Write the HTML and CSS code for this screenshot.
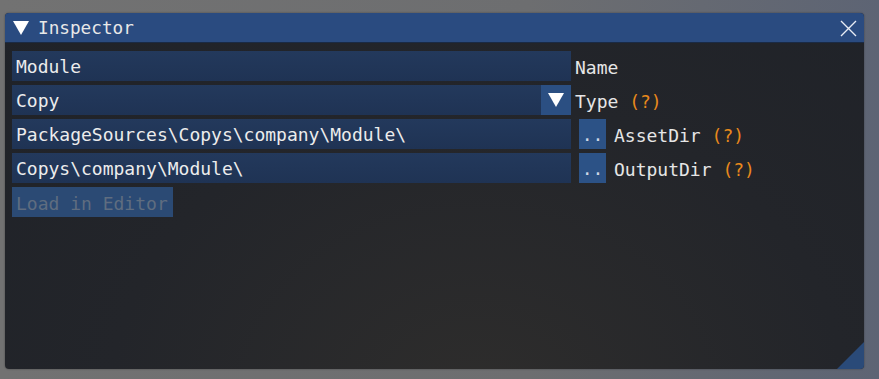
FILE: index.html
```html
<!DOCTYPE html>
<html lang="en">

<head>
    <meta charset="UTF-8">
    <title>Inspector</title>
    <link rel="stylesheet" href="styles.css">
</head>

<body>
    <div class="vindu">
        <div class="tittel">
            <svg class="pil" width="16" height="14" viewBox="0 0 16 14"><polygon points="0,0 16,0 8,14" fill="#ffffff"/></svg>
            <span class="tittelTekst">Inspector</span>
            <svg class="lukk" width="17" height="17" viewBox="0 0 17 17"><path d="M1 1 L16 16 M16 1 L1 16" stroke="#e8ecf4" stroke-width="1.4"/></svg>
        </div>
        <div class="innhold">
            <div class="rad">
                <div class="felt">Module</div>
                <span class="etikett">Name</span>
            </div>
            <div class="rad">
                <div class="felt nedtrekk">
                    <span class="feltTekst">Copy</span>
                    <span class="pilKnapp"><svg width="16" height="14" viewBox="0 0 16 14"><polygon points="0,0 16,0 8,14" fill="#ffffff"/></svg></span>
                </div>
                <span class="etikett">Type <span class="hjelp">(?)</span></span>
            </div>
            <div class="rad">
                <div class="felt">PackageSources\Copys\company\Module\</div>
                <span class="prikker">..</span>
                <span class="etikett">AssetDir <span class="hjelp">(?)</span></span>
            </div>
            <div class="rad">
                <div class="felt">Copys\company\Module\</div>
                <span class="prikker">..</span>
                <span class="etikett">OutputDir <span class="hjelp">(?)</span></span>
            </div>
            <div class="rad">
                <button class="last">Load in Editor</button>
            </div>
            <div class="grep"></div>
        </div>
    </div>
</body>

</html>
```

FILE: styles.css
```css
body {
    margin: 0;
    width: 879px;
    height: 379px;
    overflow: hidden;
    background: linear-gradient(90deg, #727272 0%, #6d6e70 60%, #5d6474 100%);
    font-family: "DejaVu Sans Mono", monospace;
    font-size: 18px;
    color: #e8e8e8;
}

.vindu {
    margin: 13px 0 0 5px;
    width: 859px;
    height: 356px;
    border-radius: 4px;
    overflow: hidden;
    display: flex;
    flex-direction: column;
    background: radial-gradient(ellipse at 55% 110%, #2e2d2c 0%, #23252a 55%, #1f2228 100%);
    box-shadow: 0 0 2px rgba(0, 0, 0, 0.4);
}

.tittel {
    height: 28px;
    flex: none;
    display: flex;
    align-items: center;
    padding: 1px 7px 0 8px;
    background: #2a4b80;
    border-bottom: 1px solid #1a2a44;
}

.pil {
    margin-right: 9px;
}

.tittelTekst {
    flex: 1;
    font-size: 17.7px;
}

.innhold {
    flex: 1;
    position: relative;
    padding: 8px 7px;
    display: flex;
    flex-direction: column;
    gap: 4px;
}

.rad {
    display: flex;
    align-items: center;
    height: 30px;
}

.felt {
    width: 555px;
    height: 30px;
    padding-left: 4px;
    line-height: 32px;
    background: linear-gradient(180deg, #23395c, #1f3354);
    color: #ececec;
    white-space: nowrap;
}

.nedtrekk {
    display: flex;
    padding-right: 0;
}

.feltTekst {
    flex: 1;
}

.pilKnapp {
    width: 30px;
    height: 30px;
    display: flex;
    align-items: center;
    justify-content: center;
    background: #2b4f82;
}

.etikett {
    margin-left: 4px;
    padding-top: 2px;
    color: #e6e6e6;
}

.hjelp {
    color: #e8891c;
}

.prikker {
    width: 27px;
    height: 30px;
    margin-left: 8px;
    margin-right: 4px;
    line-height: 32px;
    text-align: center;
    background: #2c5286;
    color: #cfd8e6;
}

.last {
    width: 161px;
    height: 30px;
    padding: 2px 4px 0;
    border: none;
    text-align: left;
    font-family: inherit;
    font-size: 18px;
    background: #2b4a74;
    color: #5f6d80;
}

.grep {
    position: absolute;
    right: 0;
    bottom: 0;
    width: 0;
    height: 0;
    border-left: 27px solid transparent;
    border-bottom: 27px solid #2a4a78;
}
```
